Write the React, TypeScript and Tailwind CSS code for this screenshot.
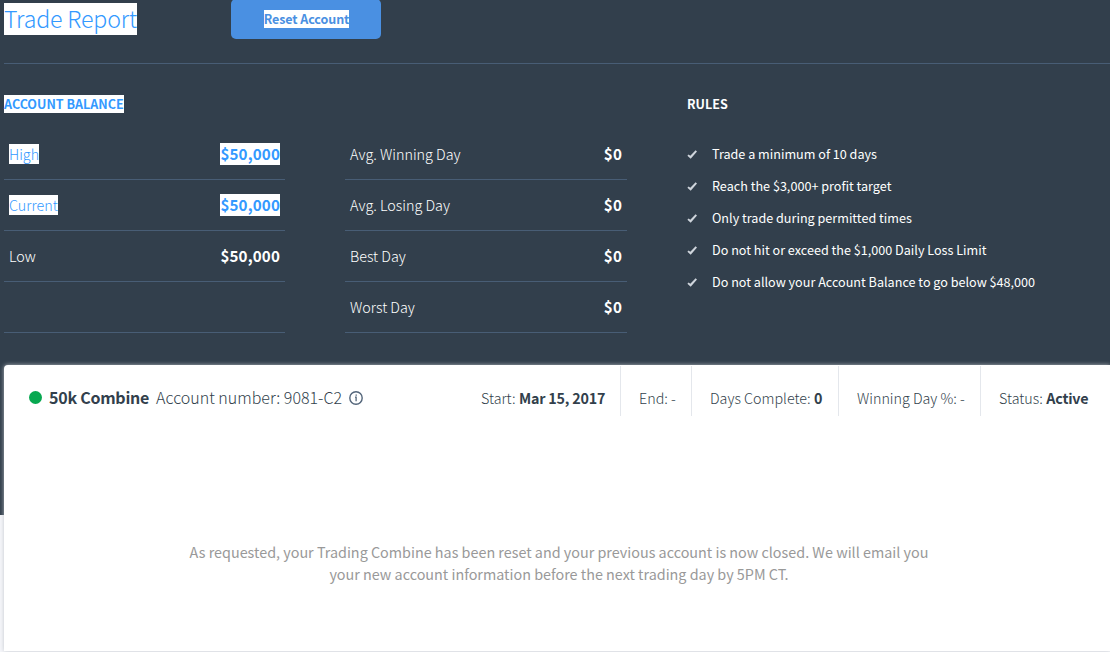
import type { ReactNode } from "react";

interface Stat {
  label: string;
  value: string;
  selected?: boolean;
}

const balances: Stat[] = [
  { label: "High", value: "$50,000", selected: true },
  { label: "Current", value: "$50,000", selected: true },
  { label: "Low", value: "$50,000" },
  { label: "", value: "" },
];

const dayStats: Stat[] = [
  { label: "Avg. Winning Day", value: "$0" },
  { label: "Avg. Losing Day", value: "$0" },
  { label: "Best Day", value: "$0" },
  { label: "Worst Day", value: "$0" },
];

const rules = [
  "Trade a minimum of 10 days",
  "Reach the $3,000+ profit target",
  "Only trade during permitted times",
  "Do not hit or exceed the $1,000 Daily Loss Limit",
  "Do not allow your Account Balance to go below $48,000",
];

const summary = [
  { label: "Start:", value: "Mar 15, 2017", width: "w-[158px]" },
  { label: "End: -", value: "", width: "w-[71px]" },
  { label: "Days Complete:", value: "0", width: "w-[147px]" },
  { label: "Winning Day %: -", value: "", width: "w-[142px]" },
  { label: "Status:", value: "Active", width: "w-[129px]" },
];

const StatTable = ({ rows }: { rows: Stat[] }) => (
  <div>
    {rows.map((row, i) => (
      <div
        key={i}
        className="flex h-[51px] items-center justify-between border-b border-[#485d75] px-[5px] whitespace-nowrap"
      >
        <span
          className={`h-5 text-[14.35px] leading-5 font-light ${
            row.selected ? "bg-white text-[#3399ff]" : "text-white"
          }`}
        >
          {row.label}
        </span>
        <span
          className={`h-[22px] text-[15.2px] leading-[20px] font-bold tracking-[0.13px] ${
            row.selected ? "bg-white text-[#3399ff]" : "text-white"
          }`}
        >
          {row.value}
        </span>
      </div>
    ))}
  </div>
);

const SectionTitle = ({ children }: { children: ReactNode }) => (
  <h2 className="mb-4 flex h-[18px] text-[12.55px] leading-[18px] font-bold whitespace-nowrap">
    {children}
  </h2>
);

const CheckIcon = () => (
  <svg viewBox="0 0 10 9" className="h-[9px] w-[10px]">
    <path
      d="M0.4 5.7 L1.6 4.4 L3.3 5.7 L8.6 0.2 L10 1.5 L3.7 8.7 Z"
      fill="#cfd5dc"
    />
  </svg>
);

const InfoIcon = () => (
  <svg viewBox="0 0 14 14" className="ml-[7px] h-[14px] w-[14px]" fill="none">
    <circle cx="7" cy="7" r="6.2" stroke="#53657a" strokeWidth="1.4" />
    <path
      d="M7.2 3.4V4.8M6 6.2H7.1V10.2"
      stroke="#53657a"
      strokeWidth="1.3"
    />
  </svg>
);

export default function App() {
  return (
    <div className="h-[652px] w-full overflow-hidden bg-[#f5f6fa] font-['Noto_Sans_CJK_SC','Noto_Sans',sans-serif] text-[#323f4c]">
      <div className="h-[515px] bg-[#323f4c] pl-1 text-white">
        <header className="flex h-16 items-start border-b border-[#485d75]">
          <h1 className="mt-[3px] h-8 w-[133px] bg-white text-[23.2px] leading-[30px] font-light tracking-[-0.17px] whitespace-nowrap text-[#3399ff]">
            Trade Report
          </h1>
          <button className="-mt-px ml-[94px] flex h-10 w-[150px] items-center justify-center rounded-[5px] bg-[#4a90e2]">
            <span className="ml-px h-[18px] bg-white text-[12.5px] leading-[18px] font-bold tracking-[-0.08px] whitespace-nowrap text-[#4a90e2]">
              Reset Account
            </span>
          </button>
        </header>

        <div className="flex pt-[31px]">
          <section className="w-[281px]">
            <SectionTitle>
              <span className="bg-white text-[#3399ff]">ACCOUNT BALANCE</span>
            </SectionTitle>
            <StatTable rows={balances} />
          </section>
          <section className="ml-[60px] w-[282px] pt-[34px]">
            <StatTable rows={dayStats} />
          </section>
          <section className="ml-[60px]">
            <SectionTitle>RULES</SectionTitle>
            <ul className="pt-[9px]">
              {rules.map((rule) => (
                <li
                  key={rule}
                  className="flex h-8 items-center gap-[15px] text-[12.62px] leading-8 whitespace-nowrap"
                >
                  <CheckIcon />
                  {rule}
                </li>
              ))}
            </ul>
          </section>
        </div>
      </div>

      <main className="relative -mt-[150px] ml-1 h-[286px] rounded-tl-sm bg-white shadow-[0_0_4px_rgba(190,195,200,0.9)]">
        <div className="flex h-[51px] justify-between pt-px">
          <div className="flex items-center pt-[13px] pl-[25px] whitespace-nowrap">
            <span className="mr-[7px] h-[13px] w-[13px] rounded-full bg-[#07a850]" />
            <span className="mr-[7px] -mt-0.5 text-[16px] leading-6 font-bold tracking-[-0.25px]">
              50k Combine
            </span>
            <span className="-mt-0.5 text-[16px] leading-6 font-light">
              Account number: 9081-C2
            </span>
            <InfoIcon />
          </div>
          <div className="flex">
            {summary.map((item) => (
              <div
                key={item.label}
                className={`flex items-center gap-[3.5px] border-r border-[#e4e7ec] pt-[13px] pl-[18px] text-[14.3px] leading-5 whitespace-nowrap last:border-r-0 ${item.width}`}
              >
                <span className="font-light">{item.label}</span>
                {item.value && (
                  <span className="font-bold tracking-[-0.2px]">
                    {item.value}
                  </span>
                )}
              </div>
            ))}
          </div>
        </div>
        <p className="pt-[125px] pl-1 text-center text-[14.36px] leading-[22px] text-[#999]">
          As requested, your Trading Combine has been reset and your previous
          account is now closed. We will email you
          <br />
          your new account information before the next trading day by 5PM CT.
        </p>
      </main>
    </div>
  );
}
